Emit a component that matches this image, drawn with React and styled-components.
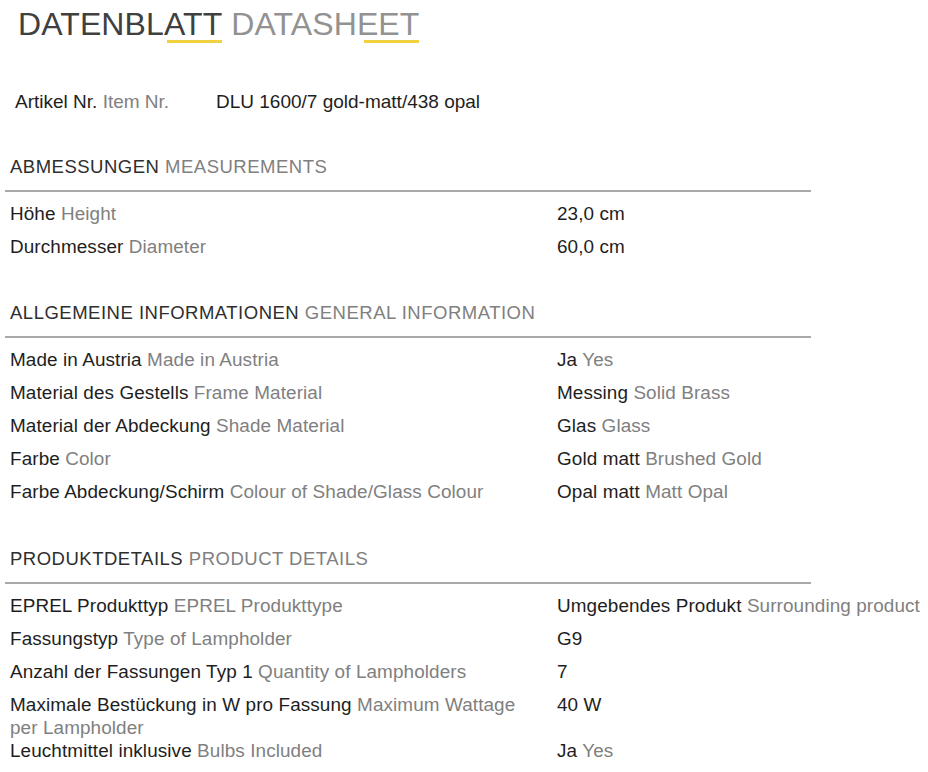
import React from "react";
import styled, { createGlobalStyle } from "styled-components";

const Global = createGlobalStyle`
  html, body { margin: 0; padding: 0; background: #fff; }
  body { font-family: "Liberation Sans", Arial, sans-serif; }
`;

const Page = styled.div`
  width: 928px;
  height: 772px;
  overflow: hidden;
  padding: 8px 0 0 5px;
  box-sizing: border-box;
  background: #fff;
`;

const Title = styled.h1`
  margin: 0 0 0 13px;
  font-weight: 400;
  font-size: 32px;
  line-height: 32px;
  display: flex;
  gap: 9px;
  letter-spacing: 0.1px;
`;

const TitleWord = styled.span`
  display: inline-block;
  padding-bottom: 3px;
  color: ${(p) => (p.$muted ? "#929292" : "#404040")};
  background: linear-gradient(#f0d13f, #f0d13f) no-repeat right bottom / 55px 3px;
`;

const ArticleRow = styled.div`
  display: grid;
  grid-template-columns: 201px auto;
  margin: 48px 0 0 10px;
  font-size: 19px;
  line-height: 22px;
  color: #1e1e1e;
`;

const Section = styled.section`
  margin-top: ${(p) => p.$top}px;
  width: 806px;
`;

const Heading = styled.h2`
  margin: 0;
  padding: 0 0 12px 5px;
  border-bottom: 2px solid #a9a9a9;
  font-weight: 400;
  font-size: 18.5px;
  line-height: 22px;
  letter-spacing: 0.5px;
  color: #2e2e2e;
  margin-bottom: 10px;
`;

const Muted = styled.span`
  color: #808080;
`;

const Row = styled.div`
  display: grid;
  grid-template-columns: 547px 371px;
  min-height: 33px;
  padding-left: 5px;
  align-items: start;
  font-size: 18.9px;
  line-height: 23px;
  letter-spacing: 0.1px;
  color: #1e1e1e;
`;

const Label = styled.div`
  padding-right: 22px;
`;

const Value = styled.div`
  white-space: nowrap;
`;

const Bi = ({ de, en }) => (
  <>
    {de}
    {en ? (
      <>
        {" "}
        <Muted>{en}</Muted>
      </>
    ) : null}
  </>
);

const sections = [
  {
    de: "ABMESSUNGEN",
    en: "MEASUREMENTS",
    top: 43,
    rows: [
      [["Höhe", "Height"], ["23,0 cm"]],
      [["Durchmesser", "Diameter"], ["60,0 cm"]],
    ],
  },
  {
    de: "ALLGEMEINE INFORMATIONEN",
    en: "GENERAL INFORMATION",
    top: 34,
    rows: [
      [["Made in Austria", "Made in Austria"], ["Ja", "Yes"]],
      [["Material des Gestells", "Frame Material"], ["Messing", "Solid Brass"]],
      [["Material der Abdeckung", "Shade Material"], ["Glas", "Glass"]],
      [["Farbe", "Color"], ["Gold matt", "Brushed Gold"]],
      [["Farbe Abdeckung/Schirm", "Colour of Shade/Glass Colour"], ["Opal matt", "Matt Opal"]],
    ],
  },
  {
    de: "PRODUKTDETAILS",
    en: "PRODUCT DETAILS",
    top: 35,
    rows: [
      [["EPREL Produkttyp", "EPREL Produkttype"], ["Umgebendes Produkt", "Surrounding product"]],
      [["Fassungstyp", "Type of Lampholder"], ["G9"]],
      [["Anzahl der Fassungen Typ 1", "Quantity of Lampholders"], ["7"]],
      [["Maximale Bestückung in W pro Fassung", "Maximum Wattage per Lampholder"], ["40 W"]],
      [["Leuchtmittel inklusive", "Bulbs Included"], ["Ja", "Yes"]],
    ],
  },
];

export default function App() {
  return (
    <Page>
      <Global />
      <Title>
        <TitleWord>DATENBLATT</TitleWord>
        <TitleWord $muted>DATASHEET</TitleWord>
      </Title>
      <ArticleRow>
        <div>
          Artikel Nr. <Muted>Item Nr.</Muted>
        </div>
        <div>DLU 1600/7 gold-matt/438 opal</div>
      </ArticleRow>
      {sections.map((s) => (
        <Section key={s.de} $top={s.top}>
          <Heading>
            {s.de} <Muted>{s.en}</Muted>
          </Heading>
          {s.rows.map(([l, v], i) => (
            <Row key={i}>
              <Label>
                <Bi de={l[0]} en={l[1]} />
              </Label>
              <Value>
                <Bi de={v[0]} en={v[1]} />
              </Value>
            </Row>
          ))}
        </Section>
      ))}
    </Page>
  );
}
